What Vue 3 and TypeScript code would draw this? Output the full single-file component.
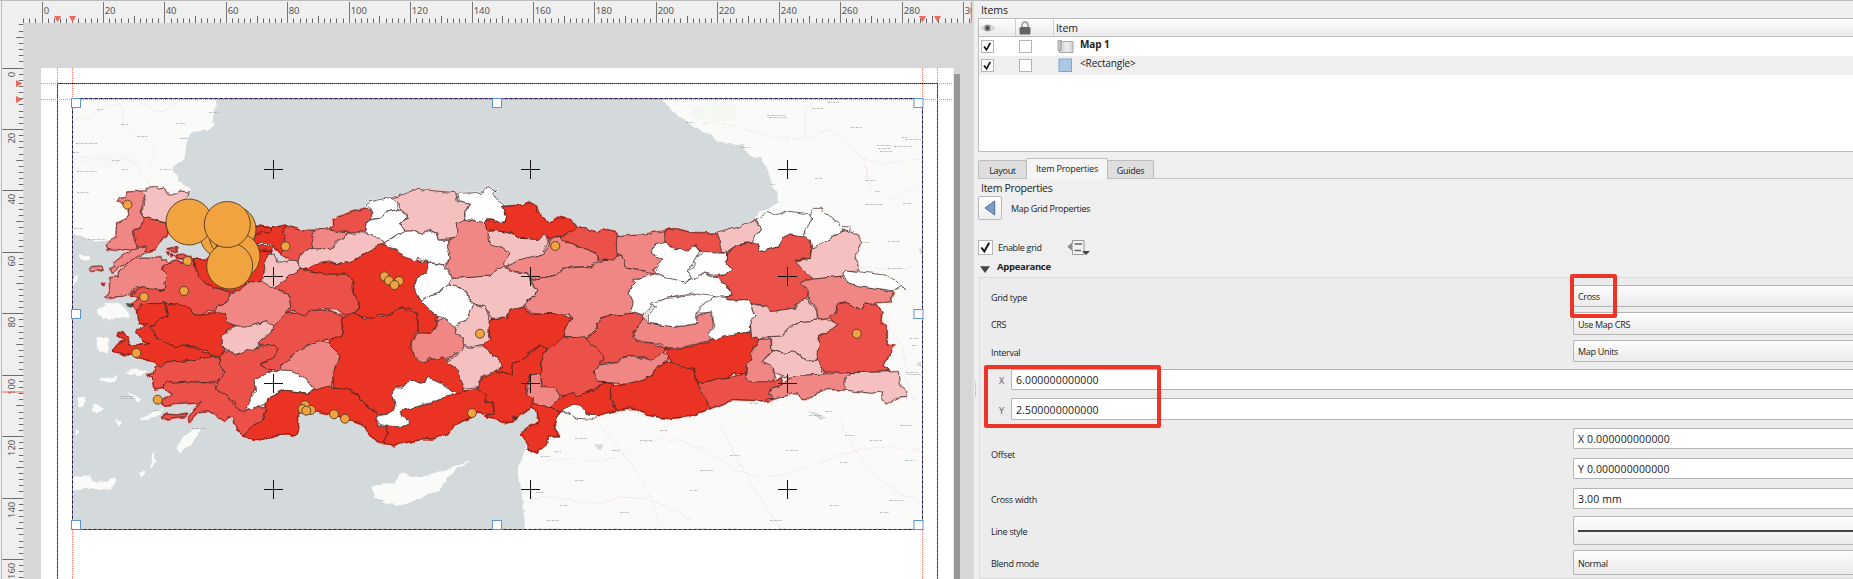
<script setup lang="ts">
type Pt = [number, number]

// Offsets of the survey sheets, in thirds of a pixel.
const sheets: Record<string, Pt> = {
  A: [180, 510],
  B: [180, 930],
  C: [930, 510],
  D: [930, 930],
  E: [1800, 570],
}

function outline(src: string): string {
  let off: Pt = [0, 0]
  const out: string[] = []
  const tokens = src.trim().split(/\s+/)
  let i = 0
  while (i < tokens.length) {
    const t = tokens[i]
    if (t in sheets) {
      off = sheets[t]
      i++
      continue
    }
    const x = (Number(t) + off[0]) / 3
    const y = (Number(tokens[i + 1]) + off[1]) / 3
    out.push(`${x.toFixed(1)},${y.toFixed(1)}`)
    i += 2
  }
  return out.join(' ')
}

const provinces: [string, string][] = [
  ['c1', 'A 248 60 262 60 262 52 285 50 297 58 310 55 325 72 352 72 362 64 390 66 388 80 376 90 340 130 318 158 290 150 270 144 252 146 246 138 252 90'],
  ['c2', 'A 172 95 178 85 198 83 204 66 248 64 256 80 246 96 244 130 250 146 240 176 218 185 222 210 235 228 228 237 215 240 195 238 180 242 140 238 136 228 150 215 168 200 170 160 200 146 210 135 206 110 200 104 190 100'],
  ['c3', 'A 250 146 270 144 300 155 320 160 323 190 310 210 280 240 258 246 255 240 258 228 235 228 225 215 230 205 220 200 218 185 245 175 248 160'],
  ['c2', 'A 258 228 228 235 215 240 205 250 195 252 160 280 165 290 152 295 157 310 166 305 178 290 205 280 225 262 245 255 258 240'],
  ['c2', 'A 86 298 96 290 125 288 130 298 110 303 92 304'],
  ['c3', 'A 125 340 136 338 134 344'],
  ['c3', 'A 322 237 350 232 345 243 330 244'],
  ['c3', 'A 346 252 370 250 392 262 398 270 385 268 350 265'],
  ['c3', 'A 318 250 326 250 324 258'],
  ['c3', 'A 332 252 340 254 334 259'],
  ['c2', 'A 138 385 148 368 152 350 146 320 172 318 178 305 210 275 230 265 270 265 300 260 302 270 322 270 326 278 310 290 308 300 324 315 318 335 312 340 315 355 295 360 280 355 250 350 225 355 212 370 190 378 165 380'],
  ['c3', 'A 326 278 350 274 380 288 402 268 400 290 420 325 440 340 470 350 485 358 510 370 505 385 495 400 475 405 468 420 440 424 425 436 405 435 390 415 360 400 325 405 312 395 270 402 245 405 232 418 215 405 225 400 238 384 215 375 220 365 250 350 280 355 300 362 315 355 312 338 318 335 324 315 308 300 310 288'],
  ['c4', 'A 402 268 440 268 500 240 600 240 632 242 620 270 608 300 610 325 608 335 570 335 540 358 535 370 510 365 478 352 470 350 440 340 420 325 405 300'],
  ['c4', 'A 560 170 600 170 632 175 680 165 668 190 675 205 672 235 665 248 655 245 640 230 632 240 600 240 570 225'],
  ['c4', 'A 570 170 600 170 632 175 628 190 612 186 600 190 570 190'],
  ['c3', 'A 680 165 700 172 728 180 762 178 785 180 770 200 768 220 765 235 745 238 720 255 715 272 700 274 678 262 662 250 670 235 675 205 668 190'],
  ['c3', 'C 70 150 105 133 165 115 185 125 186 148 168 158 162 186 130 184 95 187 60 180 72 170'],
  ['c2', 'C 15 178 60 180 95 187 125 188 100 200 78 215 68 235 10 238 5 220 12 205 3 200'],
  ['c1', 'A 610 280 625 255 640 252 655 275 680 278 690 270 710 272 718 295 705 305 690 315 685 322 670 335 650 345 638 358 615 345 605 330 612 300'],
  ['c1', 'A 715 272 720 255 745 238 765 235 C 20 237 70 235 85 215 105 197 140 188 190 190 220 208 222 218 200 235 185 240 160 255 130 272 100 282 75 280 60 272 30 278 0 295 A 735 298 718 295'],
  ['c3', 'A 640 355 650 345 685 322 718 298 C 0 305 40 312 105 312 130 335 125 348 130 375 150 410 145 420 130 430 100 435 85 420 40 415 0 425 A 740 440 715 428 700 420 672 435 692 412 685 370'],
  ['c2', 'A 608 335 640 355 685 370 692 412 672 430 B 680 10 645 50 620 32 575 48 540 50 500 38 470 10 A 468 415 475 405 500 400 512 370 540 358 570 335'],
  ['c4', 'A 312 395 325 405 360 400 390 415 405 435 430 436 470 425 500 435 B 500 35 525 48 500 60 487 85 495 125 480 140 445 138 440 122 370 105 350 112 300 95 285 72 272 55 290 35 325 15 A 322 420'],
  ['c4', 'A 235 418 245 405 312 395 322 425 B 325 15 290 35 272 50 285 80 310 95 345 110 370 105 410 120 447 132 450 142 400 150 355 155 320 155 302 175 285 155 250 148 235 145 215 130 195 138 160 120 175 102 195 90 175 80 178 68 192 70 208 85 205 102 215 110 240 103 270 98 250 90 225 65 250 50 262 42 235 40 230 0'],
  ['c3', 'B 302 175 320 155 355 155 400 150 445 142 485 145 478 160 495 190 480 205 462 220 390 215 340 220 318 212 312 235 285 240 280 200 258 195 285 190 290 170'],
  ['c3', 'B 318 212 340 220 390 215 462 220 465 235 500 260 525 290 560 300 600 290 618 292 605 330 580 345 550 375 530 362 525 340 520 322 505 322 495 332 460 310 440 302 415 305 400 320 385 338 383 325 395 310 400 295 425 278 370 282 315 285 300 275 335 250 312 235'],
  ['c3', 'B 305 322 320 313 350 315 380 310 375 320 345 322 315 328'],
  ['c3', 'B 480 140 495 125 540 130 560 118 595 115 615 95 645 105 655 120 640 145 605 160 602 170 635 180 630 190 585 210 590 230 575 255 560 290 555 300 528 297 522 275 500 260 465 230 480 205 495 185 478 160'],
  ['c3', 'B 640 50 675 12 715 10 740 15 D 0 0 60 5 100 20 95 50 100 72 70 85 30 92 B 750 105 720 120 665 165 655 180 620 178 602 165 640 145 655 120 640 100 600 110 595 100 640 60'],
  ['c1', 'B 487 80 525 48 575 48 620 32 642 48 635 65 595 100 595 115 565 120 540 130 500 122 487 105'],
  ['c2', 'B 660 180 665 165 720 120 750 105 D 30 90 55 100 90 135 78 170 75 200 65 205 65 228 30 238 5 240 B 755 225 735 205 695 183'],
  ['c0', 'B 585 210 630 185 660 180 695 182 735 205 760 238 745 250 720 245 670 240 625 262 620 282 600 285 575 300 558 292 575 265 590 240'],
  ['c4', 'B 620 280 625 262 670 240 745 250 D 10 240 60 228 75 235 120 238 200 315 202 345 228 350 235 370 220 398 185 380 160 345 110 328 60 315 0 300 B 715 300 715 340 708 375 695 378 690 370 650 375 610 390 570 385 550 375 580 345 608 328 618 295'],
  ['c4', 'D 55 100 70 85 100 72 95 50 100 25 130 5 165 30 190 25 245 15 250 0 295 -10 300 5 320 15 325 60 305 90 300 115 335 155 375 145 405 140 415 155 450 180 455 210 460 245 440 255 400 220 350 205 345 218 305 212 250 242 255 295 235 312 202 315 165 280 125 238 75 235 65 205 78 175 90 135'],
  ['c4', 'D 228 350 285 350 300 340 272 315 275 302 300 295 365 280 405 262 460 245 505 232 505 240 525 255 528 275 545 280 550 315 500 305 485 320 450 335 430 350 415 370 400 375 365 390 350 388 310 392 250 407 220 395 233 372'],
  ['c0', 'D 202 318 235 312 255 290 250 242 275 235 282 220 305 212 345 218 350 205 370 210 400 225 440 253 405 262 370 275 300 295 270 305 275 320 290 325 300 340 280 350 225 348 205 340'],
  ['c4', 'D 505 232 515 200 555 188 605 192 610 165 650 140 690 105 712 108 705 130 690 160 695 190 662 195 650 225 648 255 670 262 670 285 650 300 620 322 605 335 580 340 555 325 525 318 550 312 548 280 530 275 525 255 505 240'],
  ['c2', 'D 305 95 325 68 360 70 378 55 378 35 400 25 430 45 440 70 458 85 462 105 455 125 410 148 400 140 380 148 355 145 338 158 320 145 305 120'],
  ['c1', 'D 408 155 440 138 462 112 500 110 530 112 540 130 570 150 575 170 555 185 520 195 505 230 460 235 450 205 445 180'],
  ['c1', 'D 435 70 440 50 478 20 490 -20 525 -10 535 15 540 50 535 75 540 90 520 105 490 112 460 105 460 85'],
  ['c4', 'A 735 298 C 0 295 30 275 75 280 100 282 130 272 160 255 210 225 225 222 240 235 260 238 310 272 355 275 345 310 320 325 312 355 330 390 360 420 385 440 D 378 30 378 50 360 70 330 68 322 20 C 325 435 295 410 290 420 275 410 250 425 240 430 205 435 190 448 160 440 130 430 145 420 150 405 130 375 132 335 105 312 40 312 0 305'],
  ['c0', 'C 168 105 180 95 240 82 265 98 260 118 235 125 230 138 210 145 185 148 185 125'],
  ['c0', 'C 168 160 185 150 210 145 235 125 270 118 292 135 290 150 268 160 285 185 250 200 222 215 200 200 165 185'],
  ['c0', 'C 222 215 285 183 315 182 335 190 378 185 385 210 415 212 420 235 420 270 400 285 355 275 325 265 310 272 265 250 262 238 235 230'],
  ['c1', 'C 245 85 285 72 320 58 400 65 437 68 442 95 478 102 465 125 462 148 438 160 445 185 435 205 385 210 380 185 345 183 335 190 315 182 285 183 270 160 292 150 293 130 270 115 265 98'],
  ['c0', 'C 440 70 500 68 520 65 530 50 545 55 550 62 560 58 548 70 560 90 580 103 578 115 590 140 585 155 565 158 555 148 530 145 520 160 490 150 465 150 465 128 478 102 445 95'],
  ['c1', 'C 415 330 430 325 480 322 540 318 560 300 585 285 600 305 655 310 660 335 680 360 675 380 650 390 645 408 600 425 590 445 545 445 525 410 490 400 475 385 470 365 440 350 418 345'],
  ['c2', 'C 418 210 435 205 445 180 438 160 462 148 525 158 535 185 535 215 580 235 600 250 585 280 580 290 560 300 540 318 480 322 430 325 405 290 422 265 415 235'],
  ['c0', 'C 330 390 385 370 412 345 440 350 470 365 475 390 490 405 480 430 475 445 D 430 48 400 25 385 18 C 360 420'],
  ['c0', 'C 355 278 400 285 415 310 430 325 405 350 385 370 330 390 312 355 320 325 345 310'],
  ['c2', 'C 590 288 625 268 700 252 718 225 720 205 750 203 770 220 815 230 865 255 862 278 845 290 800 290 760 295 745 310 730 320 665 332 655 308 605 303'],
  ['c1', 'C 535 185 560 182 600 190 625 205 685 208 688 195 705 195 718 215 700 240 705 250 625 270 590 288 580 280 600 250 580 235 545 225 535 205'],
  ['c4', 'C 525 150 545 148 560 155 585 158 590 140 578 110 640 105 660 97 680 110 680 125 715 158 735 150 745 142 785 150 795 165 800 185 770 200 718 205 700 195 685 208 625 205 605 190 560 182 530 178'],
  ['c2', 'C 665 332 730 320 745 310 760 295 845 290 862 278 895 272 E 40 200 65 195 75 230 150 248 165 250 140 262 95 265 105 280 88 310 100 335 95 365 130 370 100 370 20 378 0 385 D 885 20 860 40 860 55 830 85 760 82 765 60 785 30 C 780 432 700 430 660 425 645 405 650 390 675 380 680 360 665 335'],
  ['c4', 'D 535 40 545 25 590 25 600 0 640 -10 660 12 750 10 785 30 760 60 762 85 755 100 715 118 690 105 660 125 650 140 610 165 605 190 555 185 575 175 565 145 540 130 520 105 540 85'],
  ['c3', 'C 750 203 800 170 865 187 880 175 E 15 120 50 130 55 150 48 165 55 190 42 210 10 210 C 895 275 865 270 865 255 815 228 780 222'],
  ['c3', 'E 0 385 20 378 100 370 130 370 125 400 100 425 100 445 125 458 150 458 195 478 190 490 155 512 120 500 70 500 58 515 0 525 D 885 150 880 130 825 90 865 60 860 40 885 20'],
  ['c3', 'D 712 115 760 85 825 80 830 92 880 130 885 145 870 160 850 185 860 210 890 215 850 240 800 258 750 255 730 232 700 235 690 200 695 150'],
  ['c2', 'D 850 185 870 163 E 0 525 58 518 62 505 100 498 150 512 185 490 208 490 200 510 170 530 160 555 125 570 85 583 0 575 D 885 215 855 208'],
  ['c2', 'D 655 225 662 195 690 192 695 230 730 232 750 255 740 280 720 293 690 285 670 282 670 262 650 258'],
  ['c4', 'D 660 290 670 280 720 293 745 305 735 340 738 360 748 380 715 380 710 405 685 420 682 432 655 420 655 400 635 372 650 355 688 335 685 305'],
  ['c4', 'D 720 293 750 265 790 245 800 258 850 240 890 215 E 0 575 40 582 30 620 48 660 0 675 D 860 318 835 310 810 295 790 285 760 300 745 305'],
  ['c0', 'D 755 300 790 283 815 290 830 310 860 318 850 328 800 325'],
  ['c4', 'E 35 590 80 582 125 570 160 555 185 518 210 515 280 535 290 575 335 655 260 680 205 685 140 675 105 655 75 655 50 662 45 640 32 625'],
  ['c3', 'E 295 578 385 565 435 552 445 570 515 575 545 560 545 585 515 595 505 610 520 628 480 632 400 628 335 655 300 600'],
  ['c4', 'E 195 475 240 478 330 455 360 438 450 425 455 440 478 448 460 475 455 510 438 530 435 552 400 548 385 565 295 578 282 535 245 530 210 512 205 490'],
  ['c2', 'E 100 430 130 385 145 400 235 412 285 402 295 375 335 365 340 410 325 430 340 450 300 458 240 475 195 470 170 460 130 455 95 440'],
  ['c0', 'E 95 270 165 252 255 275 310 250 350 262 380 290 400 318 340 325 275 312 200 325 165 340 140 365 130 378 92 365 100 335 88 310 105 280'],
  ['c0', 'E 145 400 145 375 170 350 150 345 165 338 200 325 270 318 290 312 345 320 300 355 290 375 290 400 235 412'],
  ['c2', 'E 50 140 120 135 195 122 195 157 165 165 150 185 185 210 160 235 170 250 75 230 65 195 50 190'],
  ['c0', 'E 150 190 165 165 195 157 225 180 285 168 300 185 285 210 262 245 275 265 250 275 205 265 165 245 185 210'],
  ['c3', 'E 195 122 235 118 275 128 350 130 365 160 370 190 335 190 300 185 290 165 265 180 235 178 195 155'],
  ['c0', 'E 285 205 315 188 380 190 378 215 395 235 375 255 340 255 310 248 280 268 262 245 285 230'],
  ['c1', 'E 350 130 420 110 465 90 482 115 460 155 410 165 380 185 368 188 362 155'],
  ['c0', 'E 468 90 505 65 540 75 560 63 630 72 638 90 610 125 608 140 570 132 545 145 540 170 480 185 475 165 455 155 482 118'],
  ['c0', 'E 630 75 640 55 668 55 670 65 715 95 720 110 750 110 750 125 730 120 685 150 655 175 635 175 630 155 610 140 612 120 638 90'],
  ['c1', 'E 635 178 685 150 735 120 775 135 785 160 765 200 778 240 735 242 730 258 635 268 600 235 580 215 630 205'],
  ['c3', 'E 380 190 410 165 470 158 480 185 540 170 545 145 570 132 610 138 632 155 632 205 582 210 605 235 635 265 600 280 625 305 620 325 585 345 580 355 515 365 500 348 450 340 440 330 385 330 380 320 400 318 380 285 340 262 375 255 395 235 378 215'],
  ['c2', 'E 600 280 635 268 730 258 745 280 880 305 870 335 830 338 795 340 785 360 740 338 710 345 708 365 690 385 655 390 650 355 625 325 625 305'],
  ['c0', 'E 732 250 740 240 775 245 855 255 885 270 920 302 905 290 880 302 830 295 765 285 745 278'],
  ['c0', 'E 345 320 380 322 385 330 445 330 455 345 468 378 450 390 452 425 420 430 365 438 345 450 325 435 345 410 340 390 338 365 300 370 300 350'],
  ['c1', 'E 455 343 500 348 515 365 580 355 620 325 650 360 652 390 600 395 575 405 545 438 500 440 478 448 455 440 450 390 468 378'],
  ['c1', 'E 500 442 548 438 575 410 600 395 680 388 720 402 690 425 655 440 660 460 652 510 620 510 585 485 550 490 515 480 515 450'],
  ['c3', 'E 690 382 708 365 712 342 740 338 785 360 795 340 830 342 845 365 843 395 858 410 858 465 882 468 865 500 850 530 870 545 760 548 675 545 650 510 655 485 660 440 715 405 700 392'],
  ['c1', 'E 485 520 515 482 550 490 585 485 620 512 655 512 672 552 620 555 600 565 570 565 525 548 515 530'],
  ['c2', 'E 460 475 478 448 512 448 515 482 485 515 515 530 525 560 510 575 450 575 438 555 440 525 455 510'],
  ['c2', 'E 545 585 570 565 620 555 672 552 755 548 735 570 738 600 690 598 660 600 632 625 608 625 590 608 520 628 505 612 520 595'],
  ['c1', 'E 755 548 895 545 898 585 920 605 918 622 890 625 855 645 845 625 848 605 815 610 735 600 735 570'],
]
const shapes = provinces.map(([tone, src]) => ({ tone, points: outline(src) }))

// Neighbouring countries and islands, in page pixels.
const land: string[] = [
  '72,99 217,99 213,115 214,125 208,130 192,131 186,142 184,160 178,161 172,168 178,180 191,192 182,222 135,246 118,238 100,241 85,238 72,234',
  '662,99 680,116 690,124 700,131 712,134 715,140 727,143 743,145 750,155 763,158 770,175 773,185 778,192 778,202 768,210 760,212 700,300 560,380 534,430 527,445 521,462 519,475 523,500 526,529 923,529 923,99',
  '372,487 381,484 396,484 400,474 420,478 445,470 470,461 458,467 447,478 441,488 425,495 403,505 385,503 375,497',
  '72,477 91,476 92,482 106,482 114,477 115,486 108,490 92,488 72,490',
  '177,450 184,435 199,428 197,437 187,447 179,452',
  '96,312 104,305 118,303 125,309 130,318 121,316 112,319 103,317',
  '97,338 108,337 109,347 106,354 99,350',
  '101,380 117,376 115,380 105,382',
  '127,372 137,369 146,371 140,376',
  '78,398 86,397 84,406 79,408',
  '80,255 90,257 87,260 81,259',
  '75,278 77,275 77,281 73,286 72,282',
  '153,453 156,460 151,468 152,459',
  '93,405 104,408 98,414 93,411',
  '116,310 122,312 126,317 118,317',
  '140,419 163,409 158,415 142,420',
  '115,421 122,422 119,425',
  '76,430 80,432 77,435',
  '139,474 144,471 145,473 141,476',
  '128,392 140,399 139,402',
]

const scribbles: [number, number, number][] = [
  [76, 143, 22], [97, 109, 6], [121, 124, 8], [137, 136, 11], [176, 123, 10], [180, 138, 9], [209, 112, 10], [73, 152, 6],
  [112, 160, 8], [77, 171, 20], [122, 169, 6], [160, 169, 11], [77, 192, 12], [75, 228, 8], [88, 239, 18],
  [767, 115, 18], [769, 117, 18], [812, 108, 11], [828, 102, 11], [851, 127, 11], [877, 145, 14], [878, 148, 13], [880, 151, 12],
  [894, 146, 19], [905, 139, 16], [902, 137, 6], [740, 147, 10], [686, 122, 7], [815, 178, 7], [866, 180, 10], [876, 191, 5],
  [866, 204, 17], [903, 203, 10], [861, 242, 9], [888, 241, 12], [888, 268, 15], [771, 184, 5],
  [910, 338, 9], [908, 374, 13], [906, 372, 12], [912, 345, 5], [575, 438, 12], [555, 451, 6], [541, 456, 10],
  [750, 403, 9], [826, 411, 6], [809, 415, 14], [640, 440, 12], [660, 430, 7], [612, 450, 8], [700, 470, 14], [690, 490, 8],
  [730, 455, 10], [786, 450, 12], [840, 462, 8], [870, 440, 12], [890, 500, 14], [880, 512, 9], [830, 505, 10], [560, 505, 8],
  [575, 480, 10], [547, 520, 12], [536, 492, 8], [120, 396, 14], [121, 398, 14], [155, 410, 6], [192, 428, 14], [900, 425, 12],
  [770, 520, 12], [620, 512, 9], [845, 435, 10], [905, 460, 10], [380, 500, 5],
]
const roads: string[] = [
  'M74 120C90 118 100 110 115 104S145 102 152 108 170 110 180 100',
  'M74 160C95 150 110 165 122 160S140 170 150 185 165 195 175 190',
  'M120 104C126 120 118 130 135 134S160 150 150 165',
  'M703 124C730 120 745 132 770 136S805 140 822 132 850 150 864 158 880 165 923 158',
  'M805 136C808 120 800 112 812 104M864 158C870 175 860 185 880 195S905 185 920 190',
  'M884 290C890 300 880 320 895 335S900 380 915 400M850 270C870 260 895 280 918 262',
  'M545 460C570 455 600 470 630 450S690 440 720 460 770 480 800 470 860 440 920 450',
  'M600 425C620 450 650 480 660 528M720 420C730 450 760 500 780 528M840 420C850 450 880 490 918 500',
  'M530 500C560 490 580 510 610 500S680 510 700 528',
]

const bigDots: Pt[] = [[223, 235], [232, 235], [233, 229], [237, 256], [189, 222], [229.7, 266], [227.3, 224.5]]
const dots: Pt[] = [
  [127.5, 204.7], [187.5, 261], [184, 291], [144, 297], [285.5, 246.3],
  [384.5, 276.3], [399, 281], [389, 280.5], [394.5, 285], [555.3, 246],
  [136.3, 353], [157.7, 399.7], [305, 405.3], [302.5, 409], [311, 410], [306.3, 410.7],
  [334, 414.3], [345, 418.7], [472, 413], [480, 333.7], [856.7, 333.7],
]

const crosses: Pt[] = []
for (const x of [273.5, 530.5, 787.5]) for (const y of [169.5, 276.5, 383.5, 489.5]) crosses.push([x, y])

const handles: Pt[] = [[71.5, 98.5], [492.5, 98.5], [914, 98.5], [71.5, 309.5], [914, 309.5], [71.5, 520.5], [492.5, 520.5], [914, 520.5]]

const step = 3.0715
interface Tick { at: number; size: number; label: string }
function ticks(origin: number, from: number, to: number): Tick[] {
  const out: Tick[] = []
  for (let v = from; v <= to; v += 2) {
    out.push({
      at: Math.floor(origin + v * step) + 0.5,
      size: v % 20 === 0 ? 21 : v % 10 === 0 ? 7 : 4.5,
      label: v % 20 === 0 ? String(v) : '',
    })
  }
  return out
}
const hTicks = ticks(42, -6, 302)
const vTicks = ticks(68, -14, 166)
const guidesX = [57.5, 72.5, 922.5, 937.5]
const guidesY = [83.5, 99.5]

const layers = [
  { name: 'Map 1', kind: 'map' },
  { name: '<Rectangle>', kind: 'rect' },
]
</script>

<template>
  <div class="window">
    <svg class="canvas" width="972" height="579" viewBox="0 0 972 579">
      <defs>
        <clipPath id="mapClip"><rect x="72" y="99" width="851" height="430" /></clipPath>
        <filter id="rough" filterUnits="userSpaceOnUse" x="60" y="90" width="880" height="450" color-interpolation-filters="sRGB">
          <feTurbulence type="fractalNoise" baseFrequency="0.12" numOctaves="2" seed="4" result="n" />
          <feDisplacementMap in="SourceGraphic" in2="n" scale="5" xChannelSelector="R" yChannelSelector="G" />
        </filter>
      </defs>
      <rect width="972" height="579" fill="#d7d7d7" />
      <rect x="954" y="74" width="6" height="505" fill="#979797" />
      <rect x="41" y="68" width="912.5" height="511" fill="#fff" />
      <path d="M57.5 579V83.5H937.5V579" class="frame" />

      <g clip-path="url(#mapClip)">
        <rect x="72" y="99" width="851" height="430" fill="#d4dadc" />
        <g filter="url(#rough)">
          <polygon v-for="(p, i) in land" :key="i" :points="p" fill="#fafaf8" stroke="#fafaf8" stroke-width="1" />
          <ellipse cx="715" cy="112" rx="24" ry="9" fill="#f5f7f3" />
          <ellipse cx="110" cy="160" rx="30" ry="8" fill="#f7f8f5" />
          <path v-for="r in roads" :key="r" :d="r" class="road" />
          <path d="M594 444l9 1-1 6-6-3zM918 248l5 3v6l-4-3zM808 411l10 2 8 5-6 1zM915 365l6-3 2 5z" fill="#d4dadc" />
        </g>
        <line v-for="(s, i) in scribbles" :key="i" :x1="s[0]" :y1="s[1] + 0.5" :x2="s[0] + s[2]" :y2="s[1] + 0.5" class="scribble" />
        <g filter="url(#rough)">
          <polygon v-for="(s, i) in shapes" :key="'u' + i" :points="s.points" :class="['under', s.tone]" />
          <polygon v-for="(s, i) in shapes" :key="i" :points="s.points" :class="['province', s.tone]" />
          <path d="M257 243.500l14 0 1 2-13 0z" fill="#d4dadc" stroke="#3a2a2a" stroke-width=".6" />
        </g>
        <path d="M126 303l8 1-3 4-4-2zM513 415l5 3-2 3-4-3z" fill="#333" opacity=".8" />
        <circle v-for="(d, i) in bigDots" :key="'b' + i" :cx="d[0]" :cy="d[1]" r="23" class="dot" />
        <circle v-for="(d, i) in dots" :key="'s' + i" :cx="d[0]" :cy="d[1]" r="4.5" class="dot" />
        <path v-for="(c, i) in crosses" :key="'c' + i" :d="`M${c[0] - 9.5} ${c[1]}h19M${c[0]} ${c[1] - 9.5}v19`" class="cross" />
      </g>

      <line v-for="x in guidesX" :key="x" :x1="x" :x2="x" y1="68" y2="579" class="guide" />
      <line v-for="y in guidesY" :key="y" x1="41" x2="953" :y1="y" :y2="y" class="guide" />
      <path d="M72.500 98.500H922.500V529.500H72.500Z" fill="none" stroke="#2c1738" />
      <path d="M72.500 98.500H922.500V529.500H72.500Z" fill="none" stroke="#7f86b8" stroke-dasharray="2 3" />
      <rect v-for="(h, i) in handles" :key="i" :x="h[0]" :y="h[1]" width="9" height="9" fill="#fff" stroke="#5c94cc" />

      <rect width="972" height="23" fill="#efefef" />
      <rect y="23" width="23.3" height="556" fill="#efefef" />
      <path d="M0 .5H972" stroke="#bcbcbc" />
      <path d="M1.5 1V579" stroke="#bcbcbc" />
      <g v-for="t in hTicks" :key="'h' + t.at">
        <line :x1="t.at" :x2="t.at" :y1="23 - t.size" y2="23" :stroke="t.size > 20 ? '#777' : '#666'" />
        <text :x="t.at + 1.2" y="14" class="num">{{ t.label }}</text>
      </g>
      <g v-for="t in vTicks" :key="'v' + t.at">
        <line :y1="t.at" :y2="t.at" :x1="23.3 - t.size" x2="23.3" stroke="#6a6a6a" />
        <text :transform="`translate(15 ${t.at + 3.2}) rotate(-90)`" text-anchor="end" class="num">{{ t.label }}</text>
      </g>
      <path v-for="x in guidesX" :key="'t' + x" :d="`M${x - 3.5} 16h7l-3.5 6.5z`" fill="#ea6a63" />
      <path v-for="y in guidesY" :key="'l' + y" :d="`M16 ${y - 3.5}v7l6.5-3.5z`" fill="#ea6a63" />
      <path d="M2 392H23.5M971.3 2V23" stroke="#ef6b62" />
    </svg>

    <section class="panel">
      <h2 class="title items-title">Items</h2>
      <div class="tree">
        <div class="row head">
          <span class="c1w"><svg width="14" height="12" viewBox="0 0 14 12"><path d="M.5 6Q6.500 0 13.500 6Q6.500 12 .5 6Z" fill="#eee" stroke="#b5b5b5" /><circle cx="6.500" cy="6" r="3.200" fill="#8d8d8d" /><circle cx="6.500" cy="6" r="1.700" fill="#444" /></svg></span>
          <span class="c2w"><svg width="12" height="14" viewBox="0 0 12 14"><path d="M3 7V4a3 3 0 0 1 6 0V7" fill="none" stroke="#a9a9a9" stroke-width="1.800" /><rect x=".5" y="6" width="11" height="7.500" rx="1.500" fill="#666" /></svg></span>
          <span class="c3w">Item</span>
        </div>
        <div v-for="l in layers" :key="l.name" :class="['row', 'item', l.kind]">
          <span class="c1w"><i class="check"><svg width="11" height="11" viewBox="0 0 11 11"><path d="M2 5.500L4.500 8.800 8.300 1.800" /></svg></i></span>
          <span class="c2w"><i class="check"></i></span>
          <span class="c3w">
            <svg v-if="l.kind === 'map'" width="17" height="15" viewBox="0 0 17 15"><defs><linearGradient id="fold"><stop offset="0" stop-color="#c4c4c4" /><stop offset=".6" stop-color="#eee" /><stop offset="1" stop-color="#d0d0d0" /></linearGradient></defs><path d="M1 1.500H4.500V2.500H16V13.500H2.500L1 11Z" fill="url(#fold)" stroke="#a8a8a8" /><path d="M4 2V10.500L2 12" fill="none" stroke="#8f8f8f" /></svg>
            <svg v-else width="17" height="15" viewBox="0 0 17 15"><rect x="2" y="1" width="12.500" height="12.500" fill="#adc8e6" stroke="#86a6c8" /></svg>
            <b>{{ l.name }}</b>
          </span>
        </div>
      </div>

      <nav class="tabs">
        <span class="tab t1">Layout</span><span class="tab t2 active">Item Properties</span><span class="tab t3">Guides</span>
      </nav>
      <h2 class="title prop-title">Item Properties</h2>
      <div class="back-row">
        <span class="back"><svg width="12" height="16" viewBox="0 0 12 16"><path d="M10.700 1V15L1 8Z" fill="#7c9dcb" stroke="#4d6c96" /></svg></span>
        <span>Map Grid Properties</span>
      </div>
      <div class="enable">
        <i class="check large"><svg width="13" height="13" viewBox="0 0 11 11"><path d="M2 5.500L4.500 8.800 8.600 1.500" /></svg></i>
        <span class="enable-label">Enable grid</span>
        <svg class="override" width="23" height="17" viewBox="0 0 23 17"><path d="M5.500 1.500H17V15.500H5.500V11L1 7.700 5.500 4Z" fill="#f3f3f3" stroke="#999" /><path d="M5.500 3V12L.5 7.700Z" fill="#8a8a8a" /><path d="M7.500 5H15M7.500 11.500H14" stroke="#666" stroke-width="1.300" /><path d="M15 12h8l-4 4z" fill="#444" /></svg>
      </div>
      <div class="section"><svg width="10" height="7" viewBox="0 0 10 7"><path d="M0 .3H10L5 7Z" fill="#444" /></svg><b>Appearance</b></div>

      <div class="group">
        <div class="field f1"><label>Grid type</label><span class="combo">Cross</span></div>
        <div class="field f2"><label>CRS</label><span class="combo">Use Map CRS</span></div>
        <div class="field f3"><label>Interval</label><span class="combo">Map Units</span></div>
        <div class="field wide f4"><label>X</label><span class="input">6.000000000000</span></div>
        <div class="field wide f5"><label>Y</label><span class="input">2.500000000000</span></div>
        <div class="field f6"><label>Offset</label><div class="pair"><span class="input">X 0.000000000000</span><span class="input">Y 0.000000000000</span></div></div>
        <div class="field f7"><label>Cross width</label><span class="input">3.00 mm</span></div>
        <div class="field f8"><label>Line style</label><span class="combo"><i class="stroke"></i></span></div>
        <div class="field f9"><label>Blend mode</label><span class="combo">Normal</span></div>
      </div>
      <i class="grip"></i>
      <i class="mark mark-type"></i>
      <i class="mark mark-interval"></i>
    </section>
  </div>
</template>

<style>
body { margin: 0; overflow: hidden; }
</style>

<style scoped>
.window { display: flex; width: 1853px; height: 579px; overflow: hidden; background: #efefef; font-family: "Open Sans", "Noto Sans", sans-serif; color: #222; }
.canvas { display: block; flex: none; }
.frame { fill: none; stroke: #222; }
.under { stroke-width: 2.2; stroke-linejoin: round; }
.under.c0 { stroke: #fff; }
.under.c1 { stroke: #f5c0c0; }
.under.c2 { stroke: #f08784; }
.under.c3 { stroke: #ec5149; }
.under.c4 { stroke: #ea3323; }
.province { stroke: #3b2725; stroke-width: .85; stroke-opacity: .85; stroke-linejoin: round; }
.c0 { fill: #fff; }
.c1 { fill: #f5c0c0; }
.c2 { fill: #f08784; }
.c3 { fill: #ec5149; }
.c4 { fill: #ea3323; }
.road { fill: none; stroke: #f1e3e2; stroke-width: .8; stroke-dasharray: 5 1; }
.scribble { stroke: #8c98a2; stroke-width: 1; stroke-dasharray: 2 .8 1 1; opacity: .65; }
.dot { fill: #f1a340; stroke: #4f3d22; stroke-width: .9; }
.cross { stroke: #111; stroke-width: 1; fill: none; }
.guide { stroke: #f0675f; stroke-dasharray: 1 1; stroke-opacity: .85; }
.num { font: 9.5px "Noto Sans", sans-serif; fill: #555; }

.panel { position: relative; width: 881px; box-sizing: border-box; padding-left: 6px; border-top: 1px solid #bcbcbc; background: #efefef; display: flex; flex-direction: column; font-size: 9px; letter-spacing: -.3px; box-shadow: inset 2px 0 #dcdcdc; }
.title { margin: 0; font-weight: 400; font-size: 10.5px; letter-spacing: -.3px; padding-left: 3px; }
.items-title { height: 17px; line-height: 19px; letter-spacing: -.1px; }
.tree { height: 133px; border: 1px solid #bdbdbd; border-right: 0; background: #fff; }
.row { display: flex; align-items: center; height: 19px; font-size: 10.5px; letter-spacing: -.1px; }
.row span { display: flex; align-items: center; }
.head { height: 17px; background: linear-gradient(#fdfdfd, #ebebeb); border-bottom: 1px solid #bdbdbd; }
.c1w { width: 34px; padding-left: 2px; }
.c2w { width: 34px; padding-left: 3px; }
.c3w { padding-left: 2px; }
.head .c2w, .head .c3w { height: 17px; border-left: 1px solid #cfcfcf; }
.row .c3w b { margin: -5px 0 0 6px; font-weight: 400; font-size: 10px; }
.row.map .c3w b { font-weight: 700; }
.row.rect { background: #efefef; }
.item .c3w { padding-left: 5px; }
.check { display: block; box-sizing: border-box; width: 13px; height: 13px; border: 1px solid #b5b5b5; background: #fff; }
.check svg { display: block; }
.check path { fill: none; stroke: #111; stroke-width: 1.7; }
.large { width: 15px; height: 15px; }
.item .c2w .check { margin-left: 1px; }

.tabs { display: flex; align-items: flex-end; margin-top: 6px; height: 20px; border-bottom: 1px solid #c2c2c2; }
.tab { box-sizing: border-box; height: 18px; line-height: 19px; border: 1px solid #bcbcbc; border-bottom: 0; border-radius: 2px 2px 0 0; background: #dedede; text-align: center; }
.t1 { width: 49px; }
.t2 { width: 81px; }
.t3 { width: 47px; }
.active { height: 21px; line-height: 20px; margin: 0 -1px -1px; width: 82px; background: #f5f5f5; letter-spacing: -.2px; }
.prop-title { height: 17px; line-height: 19px; }
.back-row { display: flex; align-items: center; height: 24px; gap: 9px; }
.back { box-sizing: border-box; width: 24px; height: 24px; border: 1px solid #b8b8b8; border-radius: 2px; background: linear-gradient(#fff, #eee); display: flex; align-items: center; justify-content: center; }
.enable { display: flex; align-items: center; margin-top: 19px; height: 17px; }
.enable-label { width: 69px; padding-left: 5px; }
.section { display: flex; align-items: center; height: 15px; margin-top: 3px; padding-left: 2px; gap: 7px; font-size: 9.5px; }
.section svg { margin-top: 5px; }
.section b { margin-top: -1px; }

.group { margin: 3px 0 0 1px; height: 301px; border: 1px solid #dcdcdc; border-right: 0; background: #ececec; }
.field { display: flex; align-items: center; }
.field label { width: 582px; padding: 2px 0 0 11px; flex: none; }
.combo, .input { flex: 1; box-sizing: border-box; height: 100%; border: 1px solid #b5b5b5; border-right: 0; border-radius: 2px 0 0 2px; padding: 1px 0 0 4px; display: flex; align-items: center; background: #fff; }
.combo { background: linear-gradient(#fdfdfd, #ebebeb); }
.input { font-size: 10.5px; letter-spacing: .14px; }
.wide label { width: 12px; padding-left: 19px; color: #555; }
.f1 { margin-top: 7px; height: 22px; }
.f2 { margin-top: 5px; height: 23px; }
.f3 { margin-top: 5px; height: 22px; }
.f4 { margin-top: 7px; height: 21px; }
.f5 { margin-top: 8px; height: 22px; }
.f6 { margin-top: 8px; height: 51px; }
.f7 { margin-top: 9px; height: 21px; }
.f8 { margin-top: 7px; height: 29px; }
.f9 { margin-top: 5px; height: 25px; }
.pair { flex: 1; height: 51px; display: flex; flex-direction: column; gap: 9px; }
.stroke { flex: 1; height: 2px; background: #444; }
.grip { position: absolute; left: 3px; top: 381px; height: 15px; border-left: 1px dotted #aaa; }
.mark { position: absolute; box-sizing: border-box; border: 4px solid #ed3426; border-radius: 2px; }
.mark-type { left: 598px; top: 273px; width: 47px; height: 44px; }
.mark-interval { left: 12px; top: 364px; width: 177px; height: 63px; }
</style>
